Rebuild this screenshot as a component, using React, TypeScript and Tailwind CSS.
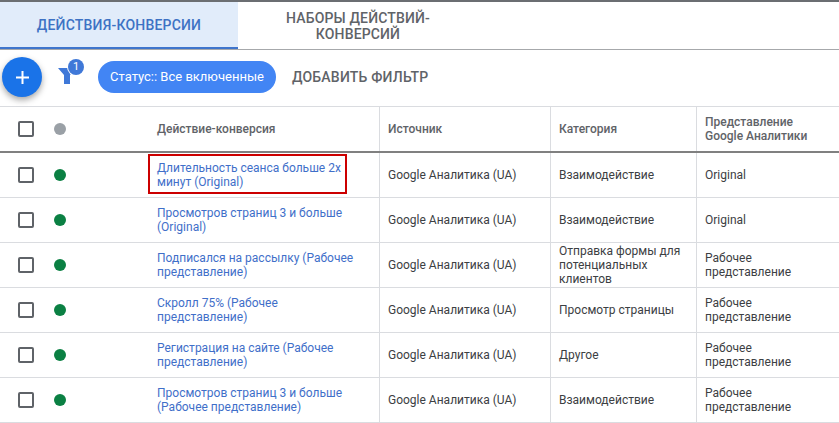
const rows = [
  { name: 'Длительность сеанса больше 2х минут (Original)', cat: 'Взаимодействие', view: 'Original', marked: true },
  { name: 'Просмотров страниц 3 и больше (Original)', cat: 'Взаимодействие', view: 'Original' },
  { name: 'Подписался на рассылку (Рабочее представление)', cat: 'Отправка формы для потенциальных клиентов', view: 'Рабочее представление' },
  { name: 'Скролл 75% (Рабочее представление)', cat: 'Просмотр страницы', view: 'Рабочее представление' },
  { name: 'Регистрация на сайте (Рабочее представление)', cat: 'Другое', view: 'Рабочее представление' },
  { name: 'Просмотров страниц 3 и больше (Рабочее представление)', cat: 'Взаимодействие', view: 'Рабочее представление' },
];

const cols = 'grid grid-cols-[379px_171px_146px_1fr]';

function Checkbox() {
  return <div className="w-[16px] h-[16px] border-2 border-[#5f6368] rounded-[2px]" />;
}

function LeadCell({ dot, children }: { dot: string; children: React.ReactNode }) {
  return (
    <div className="flex items-center pl-[18px]">
      <Checkbox />
      <div className={`w-[12px] h-[12px] rounded-full ml-[20px] ${dot}`} />
      <div className="ml-[91px] w-[198px]">{children}</div>
    </div>
  );
}

export default function App() {
  return (
    <div className="w-[839px] h-[423px] overflow-hidden bg-white font-['Roboto',sans-serif] text-[12px] leading-[14px] text-[#3c4043]">
      <div className="h-[50px] flex border-t-[2px] border-t-[#6b6e72] border-b border-b-[#a6a8ab]">
        <div className="w-[238px] pt-[1px] bg-[#e1ecfa] border-b-[2px] border-b-[#3f75cc] flex items-center justify-center text-[14px] tracking-[0.2px] font-medium text-[#3d72c4]">
          ДЕЙСТВИЯ-КОНВЕРСИИ
        </div>
        <div className="w-[240px] pt-[1px] flex items-center justify-center text-center text-[14px] tracking-[0.15px] leading-[16px] font-medium text-[#5f6368]">
          НАБОРЫ ДЕЙСТВИЙ-
          <br />
          КОНВЕРСИЙ
        </div>
      </div>

      <div className="h-[56px] flex items-center pl-[2px] pb-[2px]">
        <div className="w-[40px] h-[40px] rounded-full bg-[#1a73e8] shadow-[0_3px_6px_rgba(0,0,0,0.35)] flex items-center justify-center">
          <svg width="13" height="13" viewBox="0 0 13 13">
            <path d="M6.5 0v13M0 6.5h13" stroke="#fff" strokeWidth="2" />
          </svg>
        </div>
        <div className="relative ml-[16px] w-[26px] h-[36px]">
          <svg width="18" height="16" viewBox="0 0 18 16" className="absolute left-0 top-[9px]">
            <path d="M0 0h18l-6 7v9H6V7z" fill="#3f78d8" />
          </svg>
          <div className="absolute left-[10px] top-0 w-[16px] h-[16px] rounded-full bg-[#3f78d8] ring-1 ring-white text-white text-[11px] leading-[16px] text-center">
            1
          </div>
        </div>
        <div className="ml-[14px] w-[178px] h-[32px] rounded-full bg-[#4285f4] text-white text-[13px] flex items-center justify-center">
          Статус:: Все включенные
        </div>
        <div className="ml-[16px] text-[14px] tracking-[0.2px] font-medium text-[#5f6368]">ДОБАВИТЬ ФИЛЬТР</div>
      </div>

      <div className={`${cols} h-[47px] border-t border-t-[#dadce0] border-b-[2px] border-b-[#808080] font-medium text-[#5f6368]`}>
        <LeadCell dot="bg-[#9aa0a6]">Действие-конверсия</LeadCell>
        <div className="border-l border-[#dadce0] pl-[8px] flex items-center">Источник</div>
        <div className="border-l border-[#dadce0] pl-[8px] flex items-center">Категория</div>
        <div className="border-l border-[#dadce0] pl-[8px] flex items-center">
          Представление
          <br />
          Google Аналитики
        </div>
      </div>

      {rows.map((r) => (
        <div key={r.name} className={`${cols} h-[45px] border-b border-b-[#dadce0]`}>
          <LeadCell dot="bg-[#0b8043]">
            <div className="relative text-[#3f6fc9]">
              {r.name}
              {r.marked && (
                <div className="absolute -left-[9px] -top-[7px] w-[199px] h-[40px] border-2 border-[#cc0000]" />
              )}
            </div>
          </LeadCell>
          <div className="border-l border-[#dadce0] pl-[8px] flex items-center">Google Аналитика (UA)</div>
          <div className="border-l border-[#dadce0] pl-[8px] flex items-center">{r.cat}</div>
          <div className="border-l border-[#dadce0] pl-[8px] flex items-center">{r.view}</div>
        </div>
      ))}
    </div>
  );
}
